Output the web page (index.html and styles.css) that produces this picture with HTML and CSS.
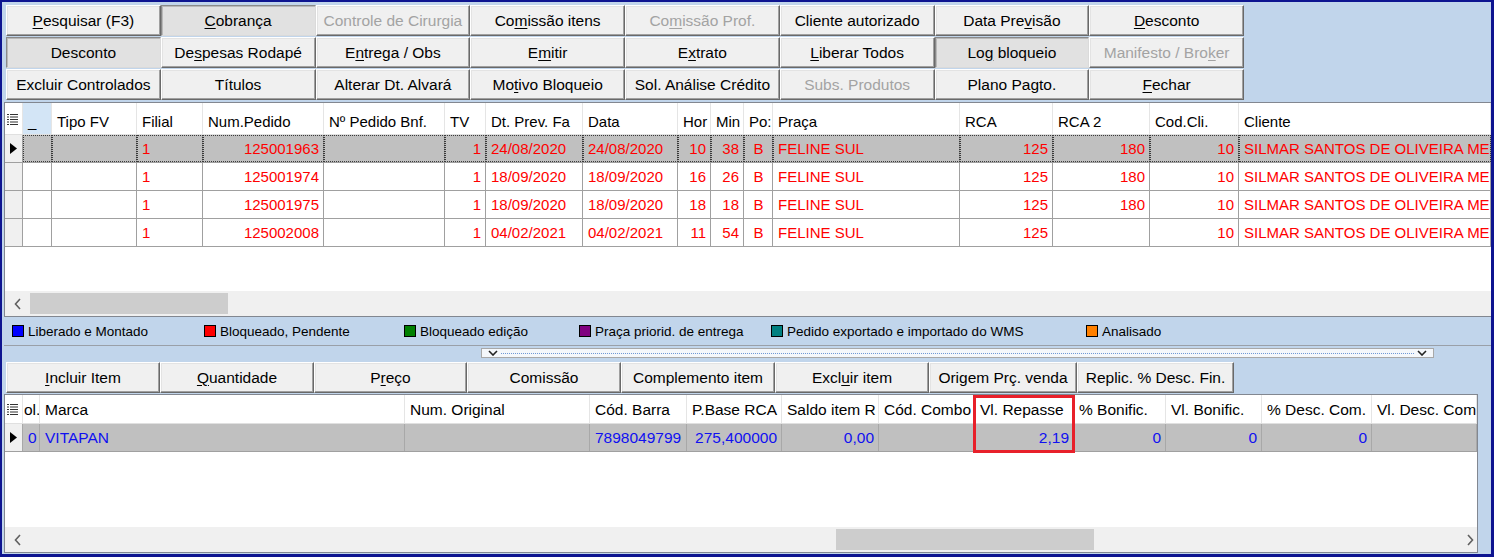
FILE: index.html
```html
<!DOCTYPE html>
<html lang="pt-BR">
<head>
    <meta charset="utf-8">
    <title>Pedidos - Liberação</title>
    <link rel="stylesheet" href="styles.css">
</head>
<body>
<div class="window">

    <div class="actions">
        <button class="btn"><span><u>P</u>esquisar (F3)</span></button>
        <button class="btn down"><span><u>C</u>obrança</span></button>
        <button class="btn off">Controle de Cirurgia</button>
        <button class="btn"><span>Co<u>m</u>issão itens</span></button>
        <button class="btn off"><span>Co<u>m</u>issão Prof.</span></button>
        <button class="btn">Cliente autorizado</button>
        <button class="btn"><span>Data Pre<u>v</u>isão</span></button>
        <button class="btn"><span><u>D</u>esconto</span></button>

        <button class="btn down">Desconto</button>
        <button class="btn"><span>De<u>s</u>pesas Rodapé</span></button>
        <button class="btn"><span>E<u>n</u>trega / Obs</span></button>
        <button class="btn"><span>E<u>m</u>itir</span></button>
        <button class="btn"><span>E<u>x</u>trato</span></button>
        <button class="btn"><span><u>L</u>iberar Todos</span></button>
        <button class="btn down"><span>Lo<u>g</u> bloqueio</span></button>
        <button class="btn off"><span>Manifesto / Bro<u>k</u>er</span></button>

        <button class="btn">Excluir Controlados</button>
        <button class="btn">Títulos</button>
        <button class="btn">Alterar Dt. Alvará</button>
        <button class="btn"><span>Mo<u>t</u>ivo Bloqueio</span></button>
        <button class="btn">Sol. Análise Crédito</button>
        <button class="btn off">Subs. Produtos</button>
        <button class="btn">Plano Pagto.</button>
        <button class="btn"><span><u>F</u>echar</span></button>
    </div>

    <!-- pedidos -->
    <div class="table table-orders">
        <div class="row head">
            <div class="cell ind">
                <svg width="11" height="12" viewBox="0 0 11 12"><g fill="#333"><rect x="0" y="1" width="2" height="1"/><rect x="3" y="1" width="8" height="1"/><rect x="0" y="3.5" width="2" height="1"/><rect x="3" y="3.5" width="8" height="1"/><rect x="0" y="6" width="2" height="1"/><rect x="3" y="6" width="8" height="1"/><rect x="0" y="8.5" width="2" height="1"/><rect x="3" y="8.5" width="8" height="1"/><rect x="0" y="11" width="2" height="1"/><rect x="3" y="11" width="8" height="1"/></g></svg>
            </div>
            <div class="cell hl">_</div>
            <div class="cell">Tipo FV</div>
            <div class="cell">Filial</div>
            <div class="cell">Num.Pedido</div>
            <div class="cell">Nº Pedido Bnf.</div>
            <div class="cell">TV</div>
            <div class="cell">Dt. Prev. Fa</div>
            <div class="cell">Data</div>
            <div class="cell">Hor</div>
            <div class="cell">Min</div>
            <div class="cell">Po:</div>
            <div class="cell">Praça</div>
            <div class="cell">RCA</div>
            <div class="cell">RCA 2</div>
            <div class="cell">Cod.Cli.</div>
            <div class="cell">Cliente</div>
        </div>

        <div class="row sel">
            <div class="cell ind"><svg width="7" height="11" viewBox="0 0 7 11"><polygon points="0,0 7,5.5 0,11" fill="#000"/></svg></div>
            <div class="cell"></div>
            <div class="cell"></div>
            <div class="cell">1</div>
            <div class="cell r">125001963</div>
            <div class="cell"></div>
            <div class="cell r">1</div>
            <div class="cell">24/08/2020</div>
            <div class="cell">24/08/2020</div>
            <div class="cell r">10</div>
            <div class="cell r">38</div>
            <div class="cell c">B</div>
            <div class="cell">FELINE SUL</div>
            <div class="cell r">125</div>
            <div class="cell r">180</div>
            <div class="cell r">10</div>
            <div class="cell">SILMAR SANTOS DE OLIVEIRA ME</div>
        </div>

        <div class="row">
            <div class="cell ind"></div>
            <div class="cell"></div>
            <div class="cell"></div>
            <div class="cell">1</div>
            <div class="cell r">125001974</div>
            <div class="cell"></div>
            <div class="cell r">1</div>
            <div class="cell">18/09/2020</div>
            <div class="cell">18/09/2020</div>
            <div class="cell r">16</div>
            <div class="cell r">26</div>
            <div class="cell c">B</div>
            <div class="cell">FELINE SUL</div>
            <div class="cell r">125</div>
            <div class="cell r">180</div>
            <div class="cell r">10</div>
            <div class="cell">SILMAR SANTOS DE OLIVEIRA ME</div>
        </div>

        <div class="row">
            <div class="cell ind"></div>
            <div class="cell"></div>
            <div class="cell"></div>
            <div class="cell">1</div>
            <div class="cell r">125001975</div>
            <div class="cell"></div>
            <div class="cell r">1</div>
            <div class="cell">18/09/2020</div>
            <div class="cell">18/09/2020</div>
            <div class="cell r">18</div>
            <div class="cell r">18</div>
            <div class="cell c">B</div>
            <div class="cell">FELINE SUL</div>
            <div class="cell r">125</div>
            <div class="cell r">180</div>
            <div class="cell r">10</div>
            <div class="cell">SILMAR SANTOS DE OLIVEIRA ME</div>
        </div>

        <div class="row">
            <div class="cell ind"></div>
            <div class="cell"></div>
            <div class="cell"></div>
            <div class="cell">1</div>
            <div class="cell r">125002008</div>
            <div class="cell"></div>
            <div class="cell r">1</div>
            <div class="cell">04/02/2021</div>
            <div class="cell">04/02/2021</div>
            <div class="cell r">11</div>
            <div class="cell r">54</div>
            <div class="cell c">B</div>
            <div class="cell">FELINE SUL</div>
            <div class="cell r">125</div>
            <div class="cell r"></div>
            <div class="cell r">10</div>
            <div class="cell">SILMAR SANTOS DE OLIVEIRA ME</div>
        </div>

        <div class="fill"></div>

        <div class="hscroll">
            <div class="arrow"><svg width="8" height="12" viewBox="0 0 8 12"><polyline points="6,1 1.5,6 6,11" fill="none" stroke="#606060" stroke-width="1.6"/></svg></div>
            <div class="thumb thumb-orders"></div>
        </div>
    </div>

    <div class="legend">
        <div class="legend-item"><span class="sq" style="background:#0000ff"></span>Liberado e Montado</div>
        <div class="legend-item"><span class="sq" style="background:#ff0000"></span>Bloqueado, Pendente</div>
        <div class="legend-item"><span class="sq" style="background:#008000"></span>Bloqueado edição</div>
        <div class="legend-item"><span class="sq" style="background:#800080"></span>Praça priorid. de entrega</div>
        <div class="legend-item"><span class="sq" style="background:#008080"></span>Pedido exportado e importado do WMS</div>
        <div class="legend-item"><span class="sq" style="background:#ff8000"></span>Analisado</div>
    </div>

    <div class="splitter">
        <div class="splitter-bar">
            <svg width="10" height="6" viewBox="0 0 10 6"><polyline points="1,1 5,5 9,1" fill="none" stroke="#222" stroke-width="1.6"/></svg>
            <div class="dots"></div>
            <svg width="10" height="6" viewBox="0 0 10 6"><polyline points="1,1 5,5 9,1" fill="none" stroke="#222" stroke-width="1.6"/></svg>
        </div>
    </div>

    <div class="item-actions">
        <button class="btn w154"><span><u>I</u>ncluir Item</span></button>
        <button class="btn w154"><span><u>Q</u>uantidade</span></button>
        <button class="btn w153"><span>P<u>r</u>eço</span></button>
        <button class="btn w154">Comissão</button>
        <button class="btn w154">Complemento item</button>
        <button class="btn w154"><span>Excl<u>u</u>ir item</span></button>
        <button class="btn w148">Origem Prç. venda</button>
        <button class="btn w157">Replic. % Desc. Fin.</button>
    </div>

    <!-- itens -->
    <div class="table table-items">
        <div class="row head">
            <div class="cell ind">
                <svg width="11" height="12" viewBox="0 0 11 12"><g fill="#333"><rect x="0" y="1" width="2" height="1"/><rect x="3" y="1" width="8" height="1"/><rect x="0" y="3.5" width="2" height="1"/><rect x="3" y="3.5" width="8" height="1"/><rect x="0" y="6" width="2" height="1"/><rect x="3" y="6" width="8" height="1"/><rect x="0" y="8.5" width="2" height="1"/><rect x="3" y="8.5" width="8" height="1"/><rect x="0" y="11" width="2" height="1"/><rect x="3" y="11" width="8" height="1"/></g></svg>
            </div>
            <div class="cell narrow">ol.</div>
            <div class="cell">Marca</div>
            <div class="cell">Num. Original</div>
            <div class="cell">Cód. Barra</div>
            <div class="cell">P.Base RCA</div>
            <div class="cell">Saldo item R</div>
            <div class="cell">Cód. Combo</div>
            <div class="cell">Vl. Repasse</div>
            <div class="cell">% Bonific.</div>
            <div class="cell">Vl. Bonific.</div>
            <div class="cell">% Desc. Com.</div>
            <div class="cell">Vl. Desc. Com</div>
        </div>

        <div class="row sel">
            <div class="cell ind"><svg width="7" height="11" viewBox="0 0 7 11"><polygon points="0,0 7,5.5 0,11" fill="#000"/></svg></div>
            <div class="cell">0</div>
            <div class="cell">VITAPAN</div>
            <div class="cell"></div>
            <div class="cell">7898049799</div>
            <div class="cell r">275,400000</div>
            <div class="cell r">0,00</div>
            <div class="cell"></div>
            <div class="cell r">2,19</div>
            <div class="cell r">0</div>
            <div class="cell r">0</div>
            <div class="cell r">0</div>
            <div class="cell"></div>
        </div>

        <div class="fill"></div>

        <div class="hscroll">
            <div class="arrow"><svg width="8" height="12" viewBox="0 0 8 12"><polyline points="6,1 1.5,6 6,11" fill="none" stroke="#606060" stroke-width="1.6"/></svg></div>
            <div class="thumb thumb-items"></div>
            <div class="arrow arrow-right"><svg width="8" height="12" viewBox="0 0 8 12"><polyline points="2,1 6.5,6 2,11" fill="none" stroke="#606060" stroke-width="1.6"/></svg></div>
        </div>
    </div>

    <div class="mark"></div>
</div>
</body>
</html>
```

FILE: styles.css
```css
:root {
    --frame: #0d1490;
    --panel: #c1d5eb;
    --face: #f0f0f0;
    --grid-line: #a0a0a0;
    --sel: #c0c0c0;
}

* {
    box-sizing: border-box;
}

body {
    margin: 0;
    font-family: "Liberation Sans", Arial, sans-serif;
}

.window {
    position: relative;
    width: 1494px;
    height: 557px;
    border: 2px solid var(--frame);
    border-right-width: 3px;
    border-bottom-width: 3px;
    background: var(--panel);
    padding: 3px 0 0 2px;
    display: flex;
    flex-direction: column;
    overflow: hidden;
}

/* botoes */
.actions {
    display: grid;
    grid-template-columns: repeat(8, 154.75px);
    grid-auto-rows: 31px;
    row-gap: 1px;
    margin-left: 2px;
}

.btn {
    font-family: "Liberation Sans", Arial, sans-serif;
    font-size: 15.5px;
    color: #000;
    background: var(--face);
    border: 1px solid;
    border-color: #fff #696969 #696969 #fff;
    box-shadow: inset -1px -1px #a0a0a0, inset 1px 1px #e3e3e3;
    padding: 0;
    margin: 0;
    white-space: nowrap;
    display: flex;
    align-items: center;
    justify-content: center;
}

.btn u {
    text-underline-offset: 2px;
}

.btn.down {
    background: #e1e1e1;
    border-color: #8a8a8a #dadada #dadada #8a8a8a;
    box-shadow: inset 1px 1px #b9b9b9;
}

.btn.off {
    color: #a3a3a3;
}

/* grades */
.table {
    background: #fff;
    border: 1px solid #828790;
    display: flex;
    flex-direction: column;
    font-size: 15px;
}

.table-orders {
    margin-top: 2px;
    height: 215px;
    border-right: none;
    --cols: 18px 29px 85px 66px 121px 121px 41px 97px 95px 33px 33px 29px 187px 93px 97px 89px 1fr;
    color: #ff0000;
}

.table-items {
    margin-top: 1px;
    margin-bottom: 1px;
    flex: 1;
    width: 1474px;
    --cols: 18px 17px 365px 185px 97px 95px 97px 96px 99px 92px 96px 110px 1fr;
    color: #1010f0;
    font-size: 15.5px;
}

.row {
    display: grid;
    grid-template-columns: var(--cols);
    height: 28px;
    border-bottom: 1px solid var(--grid-line);
    flex-shrink: 0;
}

.cell {
    padding: 0 4px 0 5px;
    line-height: 27px;
    white-space: nowrap;
    overflow: hidden;
    border-right: 1px solid var(--grid-line);
}

.cell.r {
    text-align: right;
}

.cell.c {
    text-align: center;
}

.cell.narrow {
    padding: 0 0 0 1px;
}

.cell.ind {
    background: var(--face);
    padding: 0;
    display: flex;
    align-items: center;
    justify-content: center;
}

.row.head {
    height: 32px;
    color: #000;
    border-bottom: 1px solid #e0e0e0;
}

.table-items .row.head {
    height: 29px;
}

.row.head .cell {
    border-right-color: #e5e5e5;
    line-height: 32px;
    padding-top: 3px;
}

.table-items .row.head .cell {
    line-height: 28px;
    padding-top: 1px;
}

.row.head .cell.ind {
    background: #fff;
    padding: 0 0 0 2px;
    justify-content: flex-start;
}

.row.head .cell.hl {
    background: #d3e5f6;
}

.row.sel {
    background: var(--sel);
}

.row.sel .cell.ind {
    background: var(--face);
}

.table-orders .row.sel .cell:not(.ind) {
    outline: 1px dotted #3a3a3a;
    outline-offset: -1px;
}

.table-items .row.sel .cell {
    border-right-color: #a8a8a8;
}

.fill {
    flex: 1;
}

/* barras de rolagem */
.hscroll {
    height: 25px;
    flex-shrink: 0;
    background: var(--face);
    display: flex;
    align-items: center;
}

.arrow {
    width: 25px;
    height: 25px;
    display: flex;
    align-items: center;
    justify-content: center;
    flex-shrink: 0;
}

.arrow-right {
    width: 14px;
    margin-left: auto;
}

.thumb {
    height: 21px;
    background: #cdcdcd;
}

.thumb-orders {
    width: 198px;
}

.thumb-items {
    margin-left: 806px;
    width: 258px;
}

/* legenda */
.legend {
    height: 28px;
    display: grid;
    grid-template-columns: 192px 200px 175px 192px 315px auto;
    align-items: center;
    padding-left: 8px;
    font-size: 13.5px;
    color: #000;
}

.legend-item {
    display: flex;
    align-items: center;
    white-space: nowrap;
}

.sq {
    width: 12px;
    height: 12px;
    border: 1px solid #000;
    margin-right: 4px;
}

/* divisor */
.splitter {
    height: 17px;
    border-top: 1px solid #9aa0a8;
    padding: 2px 0 0 477px;
}

.splitter-bar {
    width: 953px;
    height: 10px;
    border: 1px solid #a8a8a8;
    background: #f4f7fb;
    display: flex;
    align-items: center;
    gap: 3px;
    padding: 0 6px;
}

.dots {
    flex: 1;
    border-top: 1px dotted #6f98d6;
}

.item-actions {
    display: flex;
    height: 31px;
    margin-left: 2px;
}

.w148 { width: 148px; }
.w153 { width: 153px; }
.w154 { width: 154px; }
.w157 { width: 157px; }

/* destaque */
.mark {
    position: absolute;
    left: 971px;
    top: 393px;
    width: 102px;
    height: 58px;
    border: 3px solid #e8202a;
}
```
